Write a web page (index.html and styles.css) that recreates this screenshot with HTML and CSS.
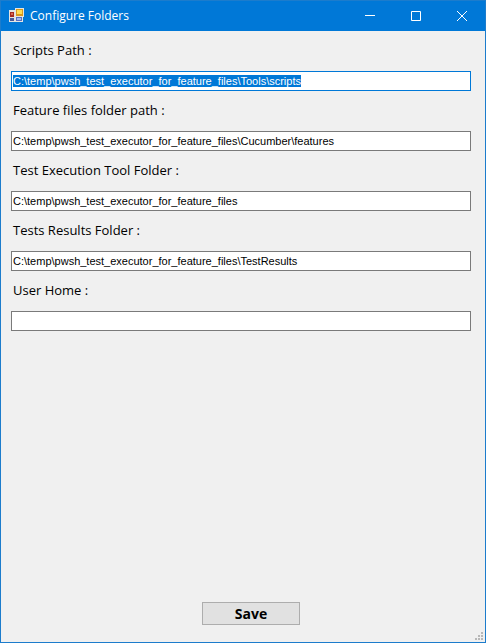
FILE: index.html
```html
<!DOCTYPE html>
<html lang="en">
<head>
<meta charset="utf-8">
<title>Configure Folders</title>
<link rel="stylesheet" href="styles.css">
</head>
<body>
<div class="window">
  <header class="titlebar">
    <svg class="app-icon" width="16" height="16" viewBox="0 0 16 16" shape-rendering="crispEdges" aria-hidden="true">
      <path fill="#e4e4e2" d="M0 2h6v12H0zM6 0h9v9H6zM6 9h8v5H6z"/>
      <path fill="#a52a20" d="M1 4h4v5H1z"/>
      <path fill="#d86a50" d="M2 5h2v2H2z"/>
      <path fill="#d99a1c" d="M7 1h7v7H7z"/>
      <path fill="#ffdc55" d="M8 2h5v4H8z"/>
      <path fill="#4a5a9a" d="M1 10h4v3H1z"/>
      <path fill="#5870c0" d="M7 9h6v4H7z"/>
      <path fill="#a8bdec" d="M8 10h4v2H8z"/>
    </svg>
    <h1 class="title">Configure Folders</h1>
    <button class="caption-button" type="button" aria-label="Minimize">
      <svg width="10" height="10" viewBox="0 0 10 10"><path d="M0 4.5h10"/></svg>
    </button>
    <button class="caption-button" type="button" aria-label="Maximize">
      <svg width="10" height="10" viewBox="0 0 10 10"><path d="M.5.5h9v9h-9z"/></svg>
    </button>
    <button class="caption-button" type="button" aria-label="Close">
      <svg width="10" height="10" viewBox="0 0 10 10"><path d="M0 0l10 10M10 0L0 10"/></svg>
    </button>
  </header>
  <form class="form">
    <label class="label" for="scripts">Scripts Path :</label>
    <input class="textbox" id="scripts" type="text" spellcheck="false" value="C:\temp\pwsh_test_executor_for_feature_files\Tools\scripts">
    <label class="label" for="features">Feature files folder path :</label>
    <input class="textbox" id="features" type="text" spellcheck="false" value="C:\temp\pwsh_test_executor_for_feature_files\Cucumber\features">
    <label class="label" for="tool">Test Execution Tool Folder :</label>
    <input class="textbox" id="tool" type="text" spellcheck="false" value="C:\temp\pwsh_test_executor_for_feature_files">
    <label class="label" for="results">Tests Results Folder :</label>
    <input class="textbox" id="results" type="text" spellcheck="false" value="C:\temp\pwsh_test_executor_for_feature_files\TestResults">
    <label class="label" for="home">User Home :</label>
    <input class="textbox" id="home" type="text" spellcheck="false">
    <button class="save" type="button">Save</button>
  </form>
  <svg class="grip" width="8" height="8" viewBox="0 0 8 8" shape-rendering="crispEdges" aria-hidden="true">
    <path d="M6 0h2v2H6zM3 3h2v2H3zM6 3h2v2H6zM0 6h2v2H0zM3 6h2v2H3zM6 6h2v2H6z"/>
  </svg>
</div>
<script src="script.js"></script>
</body>
</html>
```
FILE: styles.css
```css
* {
  box-sizing: border-box;
}

body {
  margin: 0;
}

.window {
  position: relative;
  display: flex;
  flex-direction: column;
  min-height: 100vh;
  border: 1px solid #1c7ccc;
  background: #f0f0f0;
  color: #000;
  font-family: "Open Sans", "Noto Sans", sans-serif;
}

.titlebar {
  display: flex;
  align-items: center;
  height: 30px;
  padding-left: 8px;
  background: #0078d7;
  color: #fff;
}

.app-icon {
  flex: none;
}

.title {
  flex: 1;
  margin: 0 0 0 5px;
  font-size: 12px;
  font-weight: 400;
  line-height: 16px;
}

.caption-button {
  display: grid;
  place-items: center;
  width: 46px;
  height: 30px;
  padding: 0;
  border: 0;
  background: transparent;
}

.caption-button svg {
  fill: none;
  stroke: #fff;
  stroke-width: 1;
}

.form {
  flex: 1;
  display: flex;
  flex-direction: column;
  padding: 0 14px 17px 10px;
}

.label {
  align-self: flex-start;
  padding: 9px 2px 11px;
  font-size: 13px;
  line-height: 20px;
}

.textbox {
  width: 100%;
  height: 20px;
  padding: 0 1px;
  border: 1px solid #7a7a7a;
  border-radius: 0;
  outline: 0;
  background: #fff;
  color: #000;
  font-family: "Liberation Sans", Arial, sans-serif;
  font-size: 11px;
  line-height: 14px;
}

.textbox:focus {
  border-color: #0078d7;
}

.textbox::selection {
  background: #0078d7;
  color: #fff;
}

.save {
  align-self: center;
  width: 98px;
  height: 23px;
  margin: auto 0 0 20px;
  padding: 0;
  border: 1px solid #adadad;
  background: #e1e1e1;
  color: #000;
  font-family: inherit;
  font-size: 14px;
  font-weight: 700;
  line-height: 20px;
}

.grip {
  position: absolute;
  right: 2px;
  bottom: 2px;
  fill: #b8b8b8;
}
```
FILE: script.js
```js
const first = document.getElementById("scripts");
first.focus();
first.select();
```
